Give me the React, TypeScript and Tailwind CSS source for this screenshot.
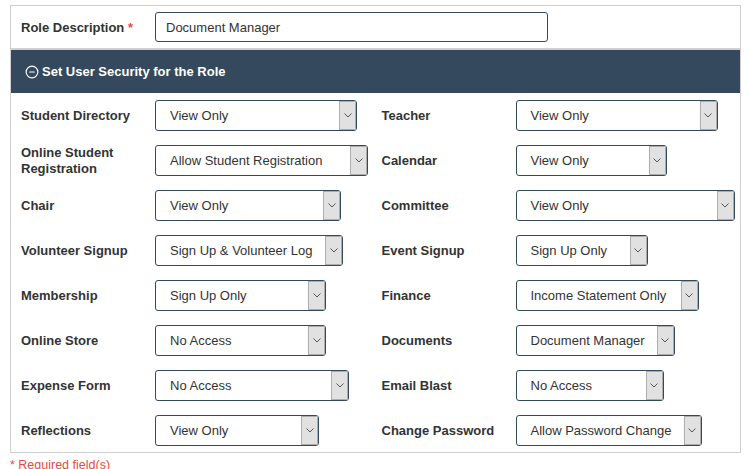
import { CircleMinus } from 'lucide-react';

const rows = [
    [
        { label: 'Student Directory', value: 'View Only', width: 'w-[202px]' },
        { label: 'Teacher', value: 'View Only', width: 'w-[202px]' },
    ],
    [
        { label: 'Online Student Registration', value: 'Allow Student Registration', width: 'w-[213px]' },
        { label: 'Calendar', value: 'View Only', width: 'w-[151px]' },
    ],
    [
        { label: 'Chair', value: 'View Only', width: 'w-[186px]' },
        { label: 'Committee', value: 'View Only', width: 'w-[219px]' },
    ],
    [
        { label: 'Volunteer Signup', value: 'Sign Up & Volunteer Log', width: 'w-[188px]' },
        { label: 'Event Signup', value: 'Sign Up Only', width: 'w-[132px]' },
    ],
    [
        { label: 'Membership', value: 'Sign Up Only', width: 'w-[171px]' },
        { label: 'Finance', value: 'Income Statement Only', width: 'w-[183px]' },
    ],
    [
        { label: 'Online Store', value: 'No Access', width: 'w-[171px]' },
        { label: 'Documents', value: 'Document Manager', width: 'w-[159px]' },
    ],
    [
        { label: 'Expense Form', value: 'No Access', width: 'w-[194px]' },
        { label: 'Email Blast', value: 'No Access', width: 'w-[148px]' },
    ],
    [
        { label: 'Reflections', value: 'View Only', width: 'w-[164px]' },
        { label: 'Change Password', value: 'Allow Password Change', width: 'w-[186px]' },
    ],
];

function FakeSelect({ value, width }: { value: string; width: string }) {
    return (
        <div className={`flex h-[31px] ${width} overflow-hidden rounded-[3px] border border-[#34495e] bg-white`}>
            <div className="flex flex-1 items-center overflow-hidden pl-[14px] text-[13px] whitespace-nowrap text-[#333]">{value}</div>
            <div className="flex w-[17px] items-center justify-center border border-[#adadad] bg-[#e1e1e1]">
                <svg width="8" height="5" viewBox="0 0 8 5" fill="none">
                    <path d="M0.5 0.5 L4 4 L7.5 0.5" stroke="#555" strokeWidth="1" />
                </svg>
            </div>
        </div>
    );
}

export default function App() {
    return (
        <div className="h-[469px] w-[749px] overflow-hidden bg-white pt-[5px] pl-[10px] font-['Liberation_Sans',Arial,sans-serif]">
            <div className="w-[731px] border border-[#d0d0d0]">
                <div className="flex items-center border-b-2 border-b-[#d0d0d0] pt-[6px] pb-[6px] pl-[10px]">
                    <div className="w-[134px] pt-[1px] text-[13px] font-bold text-[#333]">
                        Role Description <span className="text-[#e74c3c]">*</span>
                    </div>
                    <div className="flex h-[30px] w-[393px] items-center rounded-[3px] border border-[#34495e] pt-[1px] pl-[10px] text-[13px] text-[#333]">
                        Document Manager
                    </div>
                </div>
                <div className="flex h-[43px] items-center gap-[3px] bg-[#34495e] pt-[1px] pl-[14px] text-[13px] font-bold text-white">
                    <CircleMinus size={14} strokeWidth={2} />
                    Set User Security for the Role
                </div>
                <div className="flex flex-col gap-[14px] pt-[7px] pb-[6px] pl-[10px]">
                    {rows.map((row, i) => (
                        <div className="flex h-[31px] items-center" key={i}>
                            {row.map((cell, j) => (
                                <div className={`flex items-center ${j === 0 ? 'w-[362px]' : 'w-[360px]'}`} key={cell.label}>
                                    <div className="w-[134px] pr-2 text-[13px] leading-[16px] font-bold text-[#333]">{cell.label}</div>
                                    <FakeSelect value={cell.value} width={cell.width} />
                                </div>
                            ))}
                        </div>
                    ))}
                </div>
            </div>
            <div className="pt-[3px] text-[12.5px] text-[#e74c3c]">* Required field(s)</div>
        </div>
    );
}
